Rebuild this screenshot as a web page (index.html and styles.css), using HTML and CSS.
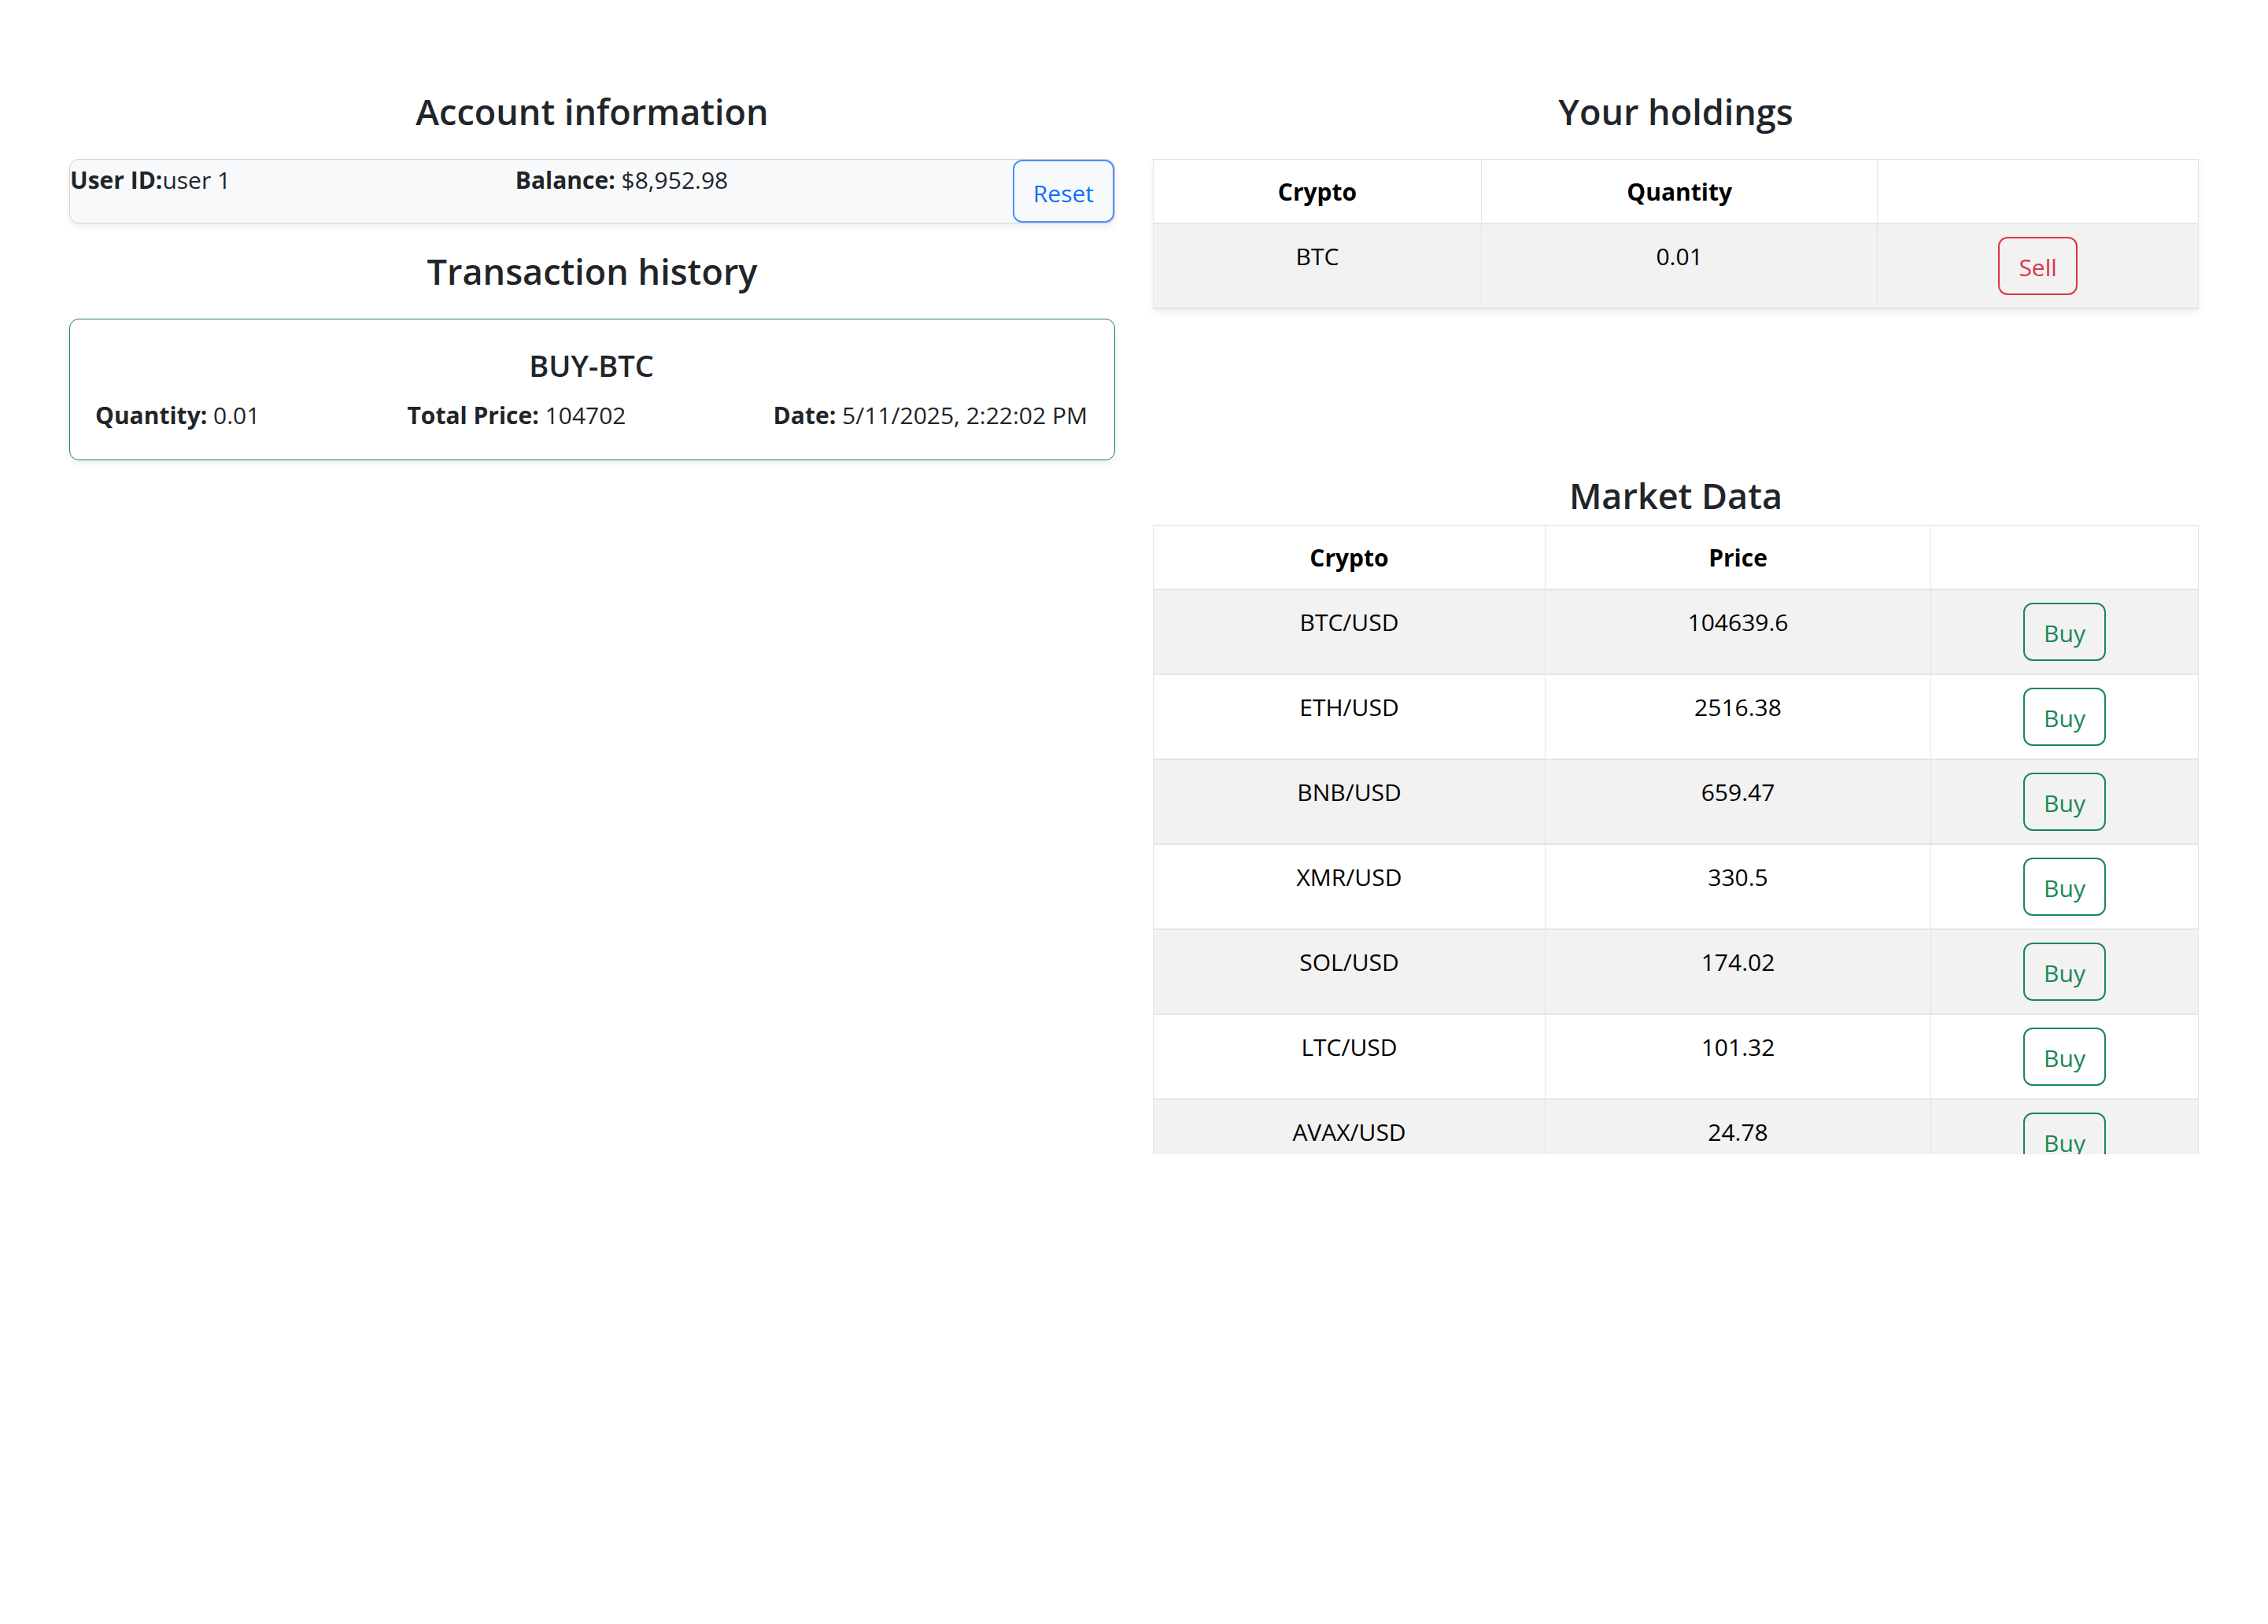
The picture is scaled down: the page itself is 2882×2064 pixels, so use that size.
FILE: index.html
```html
<!DOCTYPE html>
<html lang="en">
<head>
<meta charset="utf-8">
<title>Crypto Trading</title>
<link rel="stylesheet" href="styles.css">
</head>
<body>
<div class="page">
  <section class="column">
    <h3 class="title">Account information</h3>
    <div class="account-card">
      <div class="account-item"><strong>User ID:</strong>user 1</div>
      <div class="account-item"><strong>Balance:</strong> $8,952.98</div>
      <button class="btn btn-primary-outline btn-reset">Reset</button>
    </div>
    <h3 class="title">Transaction history</h3>
    <div class="tx-card">
      <h5 class="tx-title">BUY-BTC</h5>
      <div class="tx-row">
        <span><strong>Quantity:</strong> 0.01</span>
        <span><strong>Total Price:</strong> 104702</span>
        <span><strong>Date:</strong> 5/11/2025, 2:22:02 PM</span>
      </div>
    </div>
  </section>

  <section class="column">
    <h3 class="title">Your holdings</h3>
    <table class="table holdings">
      <colgroup>
        <col class="h-c1"><col class="h-c2"><col class="h-c3">
      </colgroup>
      <thead>
        <tr><th>Crypto</th><th>Quantity</th><th></th></tr>
      </thead>
      <tbody>
        <tr class="striped"><td>BTC</td><td>0.01</td><td><button class="btn btn-danger-outline">Sell</button></td></tr>
      </tbody>
    </table>

    <h3 class="title market-title">Market Data</h3>
    <div class="table-scroll">
      <table class="table market">
        <colgroup>
          <col class="m-c1"><col class="m-c2"><col class="m-c3">
        </colgroup>
        <thead>
          <tr><th>Crypto</th><th>Price</th><th></th></tr>
        </thead>
        <tbody>
          <tr class="striped"><td>BTC/USD</td><td>104639.6</td><td><button class="btn btn-success-outline">Buy</button></td></tr>
          <tr><td>ETH/USD</td><td>2516.38</td><td><button class="btn btn-success-outline">Buy</button></td></tr>
          <tr class="striped"><td>BNB/USD</td><td>659.47</td><td><button class="btn btn-success-outline">Buy</button></td></tr>
          <tr><td>XMR/USD</td><td>330.5</td><td><button class="btn btn-success-outline">Buy</button></td></tr>
          <tr class="striped"><td>SOL/USD</td><td>174.02</td><td><button class="btn btn-success-outline">Buy</button></td></tr>
          <tr><td>LTC/USD</td><td>101.32</td><td><button class="btn btn-success-outline">Buy</button></td></tr>
          <tr class="striped"><td>AVAX/USD</td><td>24.78</td><td><button class="btn btn-success-outline">Buy</button></td></tr>
        </tbody>
      </table>
    </div>
  </section>
</div>
</body>
</html>
```

FILE: styles.css
```css
html, body {
  margin: 0;
  padding: 0;
  background: #ffffff;
}

body {
  font-family: "Open Sans", "Noto Sans", "Liberation Sans", sans-serif;
  font-size: 30px;
  line-height: 48px;
  color: #212529;
}

.page {
  display: grid;
  grid-template-columns: 1fr 1fr;
  column-gap: 48px;
  padding: 111px 88px 0;
}

.column {
  min-width: 0;
}

.title {
  margin: 0 0 29px;
  font-size: 45px;
  line-height: 62px;
  font-weight: 600;
  text-align: center;
  color: #212529;
}

strong {
  font-weight: 700;
}

/* Account card */
.account-card {
  display: flex;
  justify-content: space-between;
  align-items: flex-start;
  background: #f8f9fa;
  border: 1px solid #d2d2d2;
  border-radius: 12px;
  box-shadow: 0 4px 8px rgba(0, 0, 0, 0.075);
  margin-bottom: 30px;
}

.account-item {
  white-space: nowrap;
  padding-top: 2px;
}

/* Buttons */
.btn {
  font-family: inherit;
  font-size: 30px;
  line-height: 48px;
  height: 74px;
  padding: 3px 24px 0;
  box-sizing: border-box;
  background: transparent;
  border: 2px solid currentColor;
  border-radius: 12px;
  cursor: pointer;
  vertical-align: top;
}

.btn-reset {
  height: 80px;
  padding-top: 6px;
}

.btn-primary-outline {
  color: #0d6efd;
  border-color: #4b91fb;
}

.btn-danger-outline {
  color: #dc3545;
  border-color: #dc3545;
}

.btn-success-outline {
  color: #198754;
  border-color: #198754;
}

/* Transaction card */
.tx-card {
  border: 1px solid #198754;
  border-radius: 12px;
  box-shadow: 0 4px 8px rgba(0, 0, 0, 0.075);
  padding: 34px 34px 32px 32px;
}

.tx-title {
  margin: 0 0 15px;
  font-size: 38px;
  line-height: 48px;
  font-weight: 600;
  text-align: center;
  color: #212529;
}

.tx-row {
  display: flex;
  justify-content: space-between;
  white-space: nowrap;
  padding-top: 1px;
}

/* Tables */
.table {
  width: 100%;
  table-layout: fixed;
  border-collapse: separate;
  border-spacing: 0;
  border-top: 1px solid #dee2e6;
  border-left: 1px solid #e3e5e9;
  box-shadow: 0 4px 8px rgba(0, 0, 0, 0.075);
  color: #000000;
}

.table th,
.table td {
  padding: 17px 16px 15px;
  line-height: 48px;
  text-align: center;
  vertical-align: top;
  border-bottom: 2px solid #e3e5e9;
  border-right: 1px solid #e3e5e9;
}

.table td:last-child {
  padding-top: 16px;
  padding-bottom: 16px;
}

.table th {
  font-weight: 700;
}

.table tr.striped td {
  background: #f2f2f2;
}

.h-c1 { width: 31.4%; }
.h-c2 { width: 37.9%; }
.h-c3 { width: 30.7%; }

.m-c1 { width: 37.5%; }
.m-c2 { width: 36.9%; }
.m-c3 { width: 25.6%; }

.market-title {
  margin: 206px 0 6px;
}

.table-scroll {
  height: 800px;
  overflow: hidden;
}
```
